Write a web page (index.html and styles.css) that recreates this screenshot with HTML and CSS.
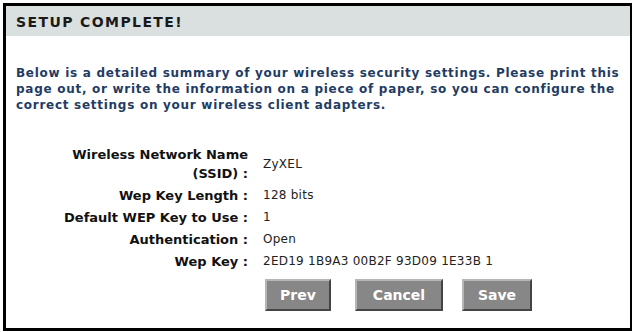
FILE: index.html
```html
<!DOCTYPE html>
<html>
<head>
<meta charset="utf-8">
<link rel="stylesheet" href="styles.css">
</head>
<body>
<div class="box">
  <div class="head">SETUP COMPLETE!</div>
  <div class="body">
    <p class="intro">Below is a detailed summary of your wireless security settings. Please print this page out, or write the information on a piece of paper, so you can configure the correct settings on your wireless client adapters.</p>
    <div class="grid">
      <div class="label">Wireless Network Name<br>(SSID)&nbsp;:</div><div class="value">ZyXEL</div>
      <div class="label">Wep Key Length&nbsp;:</div><div class="value">128 bits</div>
      <div class="label">Default WEP Key to Use&nbsp;:</div><div class="value">1</div>
      <div class="label">Authentication&nbsp;:</div><div class="value">Open</div>
      <div class="label">Wep Key&nbsp;:</div><div class="value">2ED19 1B9A3 00B2F 93D09 1E33B 1</div>
    </div>
    <div class="buttons">
      <button class="btn btn-prev">Prev</button>
      <button class="btn btn-cancel">Cancel</button>
      <button class="btn btn-save">Save</button>
    </div>
  </div>
</div>
</body>
</html>
```
FILE: styles.css
```css
html, body { margin: 0; padding: 0; background: #fff; }
body { padding: 3px 5px 0 3px; }
.box {
  border: 3px solid #000;
  border-right-width: 2px;
  height: 328px;
  box-sizing: border-box;
  background: #fff;
}
.head {
  background: #dadfe0;
  height: 30px;
  line-height: 32px;
  padding-left: 10px;
  font-family: "DejaVu Sans", sans-serif;
  font-weight: bold;
  font-size: 14px;
  letter-spacing: 1.4px;
  color: #1a1a1a;
}
.body { padding: 29px 0 0 10px; }
.intro {
  margin: 0;
  font-family: "DejaVu Sans", sans-serif;
  font-weight: bold;
  font-size: 12px;
  letter-spacing: 0.72px;
  line-height: 16px;
  color: #1f3c64;
  width: 616px;
}
.grid {
  display: grid;
  grid-template-columns: 232px auto;
  column-gap: 15px;
  margin-top: 30px;
  align-items: center;
}
.label {
  text-align: right;
  font-family: "DejaVu Sans", sans-serif;
  font-weight: bold;
  font-size: 13px;
  line-height: 19px;
  color: #111;
  padding: 2px 0 1px;
}
.value {
  font-family: "DejaVu Sans", sans-serif;
  font-size: 12px;
  letter-spacing: 0.25px;
  color: #222;
}
.buttons {
  display: flex;
  margin: 7px 0 0 249px;
}
.btn {
  height: 32px;
  background: #878787;
  border: 2px solid;
  border-color: #b5b5b5 #444 #444 #b5b5b5;
  color: #fff;
  font-family: "DejaVu Sans", sans-serif;
  font-weight: bold;
  font-size: 14px;
  padding: 0;
}
.btn-prev { width: 66px; }
.btn-cancel { width: 88px; margin-left: 24px; }
.btn-save { width: 70px; margin-left: 19px; }
```
